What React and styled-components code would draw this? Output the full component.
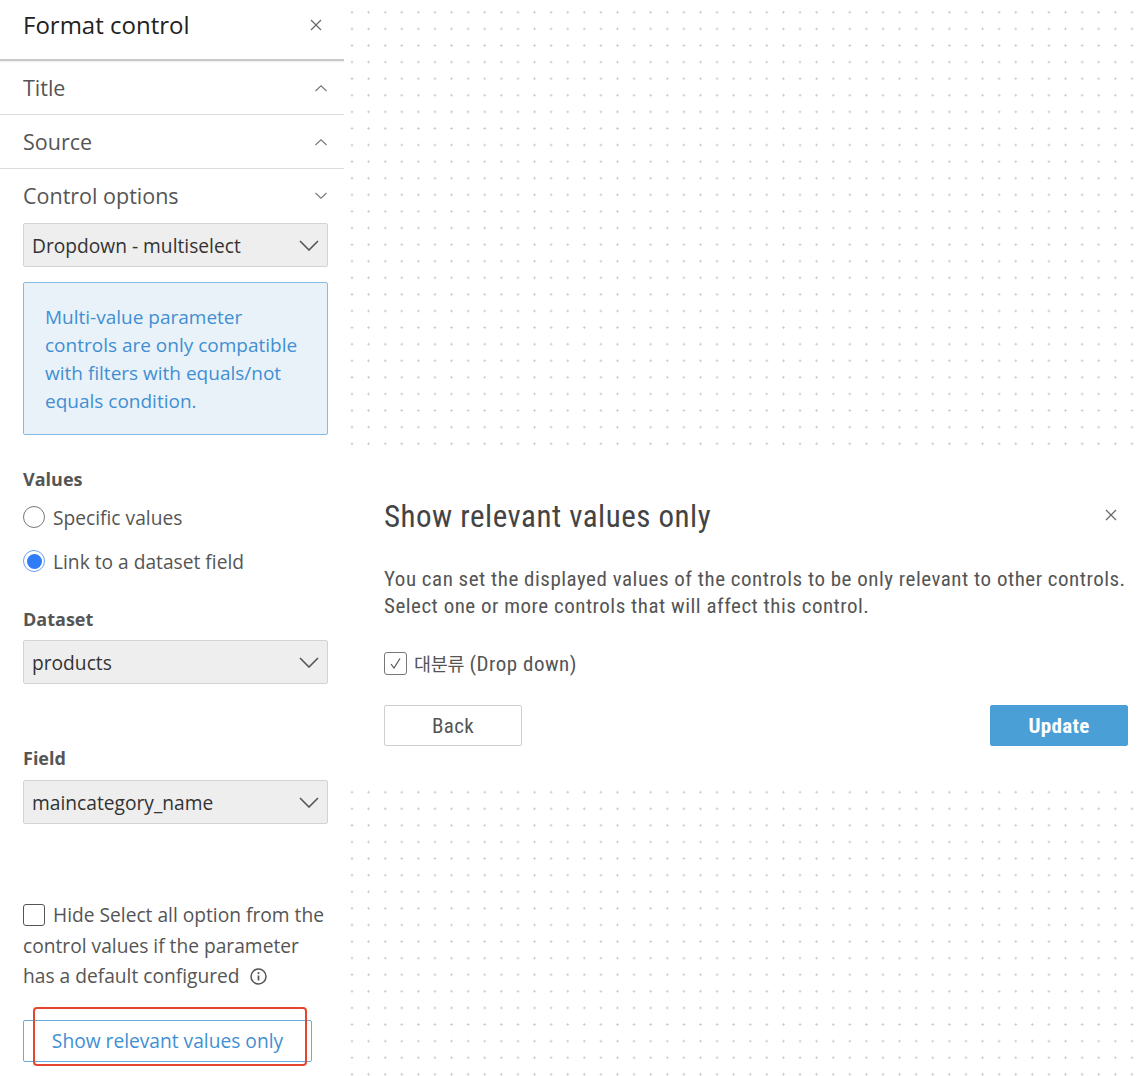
import React, { useState } from "react";
import styled, { createGlobalStyle } from "styled-components";

const GlobalStyle = createGlobalStyle`
  html, body {
    margin: 0;
    padding: 0;
    background: #ffffff;
  }
  body {
    font-family: "Open Sans", "Noto Sans", "Noto Sans CJK KR", sans-serif;
    color: #444;
  }
`;

const Page = styled.div`
  display: flex;
  width: 1144px;
  height: 1076px;
  overflow: hidden;
`;

const Panel = styled.aside`
  width: 344px;
  flex-shrink: 0;
  background: #fff;
  display: flex;
  flex-direction: column;
`;

const PanelHeader = styled.div`
  height: 59px;
  display: flex;
  align-items: center;
  justify-content: space-between;
  padding: 0 22px 0 23px;
  border-bottom: 2px solid #c9c9c9;
  box-shadow: 0 1px 1px rgba(0, 0, 0, 0.06);
`;

const PanelTitle = styled.div`
  font-size: 24px;
  color: #222;
  padding-bottom: 10px;
`;

const CloseBtn = styled.button`
  border: none;
  background: none;
  padding: 0;
  display: flex;
  color: #666;
  cursor: pointer;
  margin-top: ${(p) => p.$top || 0}px;
  margin-right: ${(p) => p.$right || 0}px;
`;

const SectionRow = styled.div`
  height: 53px;
  display: flex;
  align-items: center;
  justify-content: space-between;
  padding: 0 16px 0 23px;
  border-bottom: ${(p) => (p.$last ? "none" : "1px solid #dcdcdc")};
  font-size: 21.5px;
  color: #555;
`;

const Body = styled.div`
  padding: 0 16px 0 23px;
  display: flex;
  flex-direction: column;
`;

const Select = styled.div`
  height: 42px;
  margin-top: ${(p) => p.$top || 0}px;
  background: #eeeeee;
  border: 1px solid #d3d3d3;
  border-radius: 2px;
  display: flex;
  align-items: center;
  justify-content: space-between;
  padding: 0 8px 0 8px;
  font-size: 19.2px;
  font-weight: 500;
  color: #333;
`;

const InfoBox = styled.div`
  margin-top: 15px;
  background: #eaf2f9;
  border: 1px solid #86bbe4;
  border-radius: 2px;
  padding: 20px 28px 19px 21px;
  font-size: 19px;
  line-height: 28px;
  color: #3f8fd2;
`;

const Label = styled.div`
  margin-top: ${(p) => p.$top}px;
  font-size: 18px;
  font-weight: 700;
  color: #555;
  line-height: 24px;
`;

const RadioRow = styled.label`
  display: flex;
  align-items: center;
  gap: 8px;
  height: 28px;
  margin-top: ${(p) => p.$top}px;
  font-size: 19.2px;
  color: #555;
`;

const RadioDot = styled.span`
  width: 22px;
  height: 22px;
  box-sizing: border-box;
  border-radius: 50%;
  border: ${(p) => (p.$on ? "1.5px solid #6aa0f4" : "1px solid #777")};
  display: flex;
  align-items: center;
  justify-content: center;
  background: #fff;
  &::after {
    content: "";
    display: ${(p) => (p.$on ? "block" : "none")};
    width: 15px;
    height: 15px;
    border-radius: 50%;
    background: #2e7cf6;
  }
`;

const CheckRow = styled.div`
  margin-top: 76px;
  font-size: 19.2px;
  line-height: 30.5px;
  color: #555;
`;

const Box = styled.span`
  display: inline-block;
  vertical-align: -4px;
  width: 22px;
  height: 22px;
  box-sizing: border-box;
  border: 1.5px solid #555;
  border-radius: 3px;
  margin-right: 8px;
`;

const InfoIcon = styled.span`
  display: inline-flex;
  vertical-align: -2px;
  margin-left: 10px;
  color: #555;
`;

const ButtonWrap = styled.div`
  position: relative;
  margin-top: 28px;
  width: 289px;
`;

const OutlineButton = styled.button`
  width: 289px;
  height: 42px;
  background: #fff;
  border: 1px solid #6aabde;
  border-radius: 2px;
  font-family: inherit;
  font-size: 19.2px;
  color: #3f8fd2;
  cursor: pointer;
`;

const Annotation = styled.div`
  position: absolute;
  left: 10px;
  top: -13px;
  width: 274px;
  height: 59px;
  box-sizing: border-box;
  border: 2px solid #e5452f;
  border-radius: 4px;
  pointer-events: none;
`;

const Canvas = styled.main`
  flex: 1;
  padding-top: 453px;
  background-color: #fff;
  background-image: radial-gradient(circle, #c8c8c8 0.9px, transparent 1.3px);
  background-size: 16.6px 16.6px;
  background-position: -0.3px 4px;
`;

const Modal = styled.section`
  background: #fff;
  height: 332px;
  box-sizing: border-box;
  padding: 0 16px 0 40px;
  font-family: "Liberation Sans Narrow", "Arial Narrow", "Roboto Condensed", "Noto Sans CJK KR", sans-serif;
  display: flex;
  flex-direction: column;
`;

const ModalHead = styled.div`
  display: flex;
  justify-content: space-between;
  align-items: flex-start;
  margin-top: 46px;
`;

const ModalTitle = styled.h2`
  margin: 0;
  font-weight: 400;
  font-size: 31px;
  letter-spacing: 0.5px;
  line-height: 36px;
  color: #444;
`;

const ModalText = styled.p`
  margin: 31px 0 0;
  font-size: 21px;
  letter-spacing: 0.5px;
  line-height: 27px;
  color: #555;
`;

const ModalCheck = styled.label`
  display: flex;
  align-items: center;
  gap: 7px;
  margin-top: 30px;
  font-size: 21px;
  letter-spacing: 0.5px;
  color: #555;
  height: 26px;
`;

const SmallBox = styled.span`
  width: 23px;
  height: 23px;
  box-sizing: border-box;
  border: 1.5px solid #777;
  border-radius: 3px;
  display: flex;
  align-items: center;
  justify-content: center;
  color: #555;
`;

const Korean = styled.span`
  font-family: "Noto Sans CJK KR", sans-serif;
  font-size: 18.5px;
  letter-spacing: -0.3px;
`;

const Actions = styled.div`
  display: flex;
  justify-content: space-between;
  margin-top: 29px;
`;

const ModalButton = styled.button`
  width: 138px;
  height: 41px;
  border-radius: 2px;
  font-family: inherit;
  font-size: 21px;
  letter-spacing: 0.3px;
  cursor: pointer;
  border: 1px solid ${(p) => (p.$primary ? "#4a9fd6" : "#cfcfcf")};
  background: ${(p) => (p.$primary ? "#4a9fd6" : "#fff")};
  color: ${(p) => (p.$primary ? "#fff" : "#555")};
  font-weight: ${(p) => (p.$primary ? 700 : 400)};
`;

const XIcon = ({ size = 13 }) => (
  <svg width={size} height={size} viewBox="0 0 12 12" fill="none">
    <path d="M1 1L11 11M11 1L1 11" stroke="currentColor" strokeWidth="1.2" />
  </svg>
);

const Chevron = ({ up, big }) =>
  big ? (
    <svg width="20" height="11" viewBox="0 0 20 11" fill="none">
      <path d="M1 1L10 10L19 1" stroke="#555" strokeWidth="1.6" />
    </svg>
  ) : (
    <svg width="14" height="8" viewBox="0 0 14 8" fill="none">
      <path
        d={up ? "M1.5 7L7 1.8L12.5 7" : "M1.5 1L7 6.2L12.5 1"}
        stroke="#777"
        strokeWidth="1.1"
      />
    </svg>
  );

const Check = () => (
  <svg width="13" height="13" viewBox="0 0 13 13" fill="none">
    <path d="M2 7L5 11L11 1.5" stroke="#555" strokeWidth="1.2" />
  </svg>
);

const Info = () => (
  <svg width="17" height="17" viewBox="0 0 17 17" fill="none">
    <circle cx="8.5" cy="8.5" r="7.5" stroke="#555" strokeWidth="1.5" />
    <circle cx="8.5" cy="5" r="1.1" fill="#555" />
    <path d="M8.5 7.5V12.5" stroke="#555" strokeWidth="1.7" />
  </svg>
);

const sections = [
  { name: "Title", up: true },
  { name: "Source", up: true },
  { name: "Control options", up: false },
];

export default function App() {
  const [mode, setMode] = useState("link");

  return (
    <>
      <GlobalStyle />
      <Page>
        <Panel>
          <PanelHeader>
            <PanelTitle>Format control</PanelTitle>
            <CloseBtn $top={-9}>
              <XIcon size={12} />
            </CloseBtn>
          </PanelHeader>
          {sections.map((s, i) => (
            <SectionRow key={s.name} $last={i === sections.length - 1}>
              {s.name}
              <Chevron up={s.up} />
            </SectionRow>
          ))}
          <Body>
            <Select $top={1}>
              Dropdown - multiselect
              <Chevron big />
            </Select>
            <InfoBox>
              Multi-value parameter controls are only compatible with filters
              with equals/not equals condition.
            </InfoBox>
            <Label $top={32}>Values</Label>
            <RadioRow $top={12} onClick={() => setMode("specific")}>
              <RadioDot $on={mode === "specific"} />
              Specific values
            </RadioRow>
            <RadioRow $top={16} onClick={() => setMode("link")}>
              <RadioDot $on={mode === "link"} />
              Link to a dataset field
            </RadioRow>
            <Label $top={32}>Dataset</Label>
            <Select $top={9}>
              products
              <Chevron big />
            </Select>
            <Label $top={62}>Field</Label>
            <Select $top={10}>
              maincategory_name
              <Chevron big />
            </Select>
            <CheckRow>
              <Box />
              Hide Select all option from the control values if the parameter
              has a default configured
              <InfoIcon>
                <Info />
              </InfoIcon>
            </CheckRow>
            <ButtonWrap>
              <OutlineButton>Show relevant values only</OutlineButton>
              <Annotation />
            </ButtonWrap>
          </Body>
        </Panel>
        <Canvas>
          <Modal>
            <ModalHead>
              <ModalTitle>Show relevant values only</ModalTitle>
              <CloseBtn $top={10} $right={11}>
                <XIcon size={12} />
              </CloseBtn>
            </ModalHead>
            <ModalText>
              You can set the displayed values of the controls to be only
              relevant to other controls.
              <br />
              Select one or more controls that will affect this control.
            </ModalText>
            <ModalCheck>
              <SmallBox>
                <Check />
              </SmallBox>
              <span>
                <Korean>대분류</Korean> (Drop down)
              </span>
            </ModalCheck>
            <Actions>
              <ModalButton>Back</ModalButton>
              <ModalButton $primary>Update</ModalButton>
            </Actions>
          </Modal>
        </Canvas>
      </Page>
    </>
  );
}
